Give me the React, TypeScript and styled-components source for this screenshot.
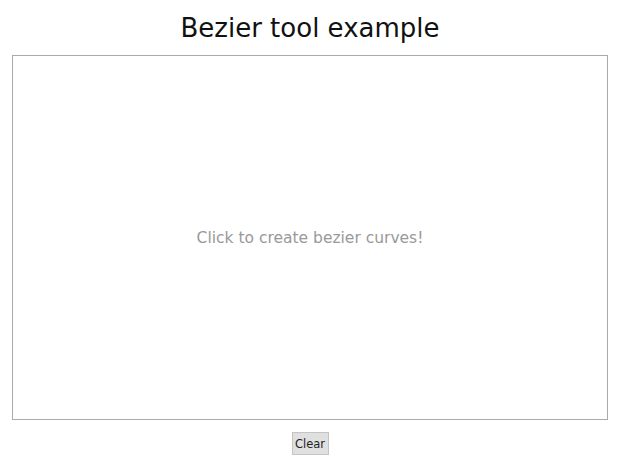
import React from "react";
import styled, { createGlobalStyle } from "styled-components";

const Global = createGlobalStyle`
  html, body { margin: 0; padding: 0; background: #fff; }
  body { font-family: "DejaVu Sans", sans-serif; }
`;

const Page = styled.div`
  display: flex;
  flex-direction: column;
  align-items: center;
  padding: 0 12px;
`;

const Title = styled.h1`
  margin: 11px 0 0;
  font-size: 26px;
  font-weight: normal;
  line-height: 34px;
  color: #111;
`;

const Canvas = styled.div`
  box-sizing: border-box;
  margin-top: 10px;
  width: 596px;
  height: 365px;
  border: 1px solid #aaa;
  display: flex;
  align-items: center;
  justify-content: center;
`;

const Hint = styled.span`
  font-size: 15.5px;
  color: #999;
`;

const Button = styled.button`
  margin-top: 12px;
  height: 23px;
  width: 37px;
  padding: 0;
  font-family: "DejaVu Sans", sans-serif;
  font-size: 11.5px;
  color: #222;
  background: #e0e0e0;
  border: 1px solid #c4c4c4;
  border-radius: 0;
`;

export default function App() {
  return (
    <Page>
      <Global />
      <Title>Bezier tool example</Title>
      <Canvas>
        <Hint>Click to create bezier curves!</Hint>
      </Canvas>
      <Button>Clear</Button>
    </Page>
  );
}
